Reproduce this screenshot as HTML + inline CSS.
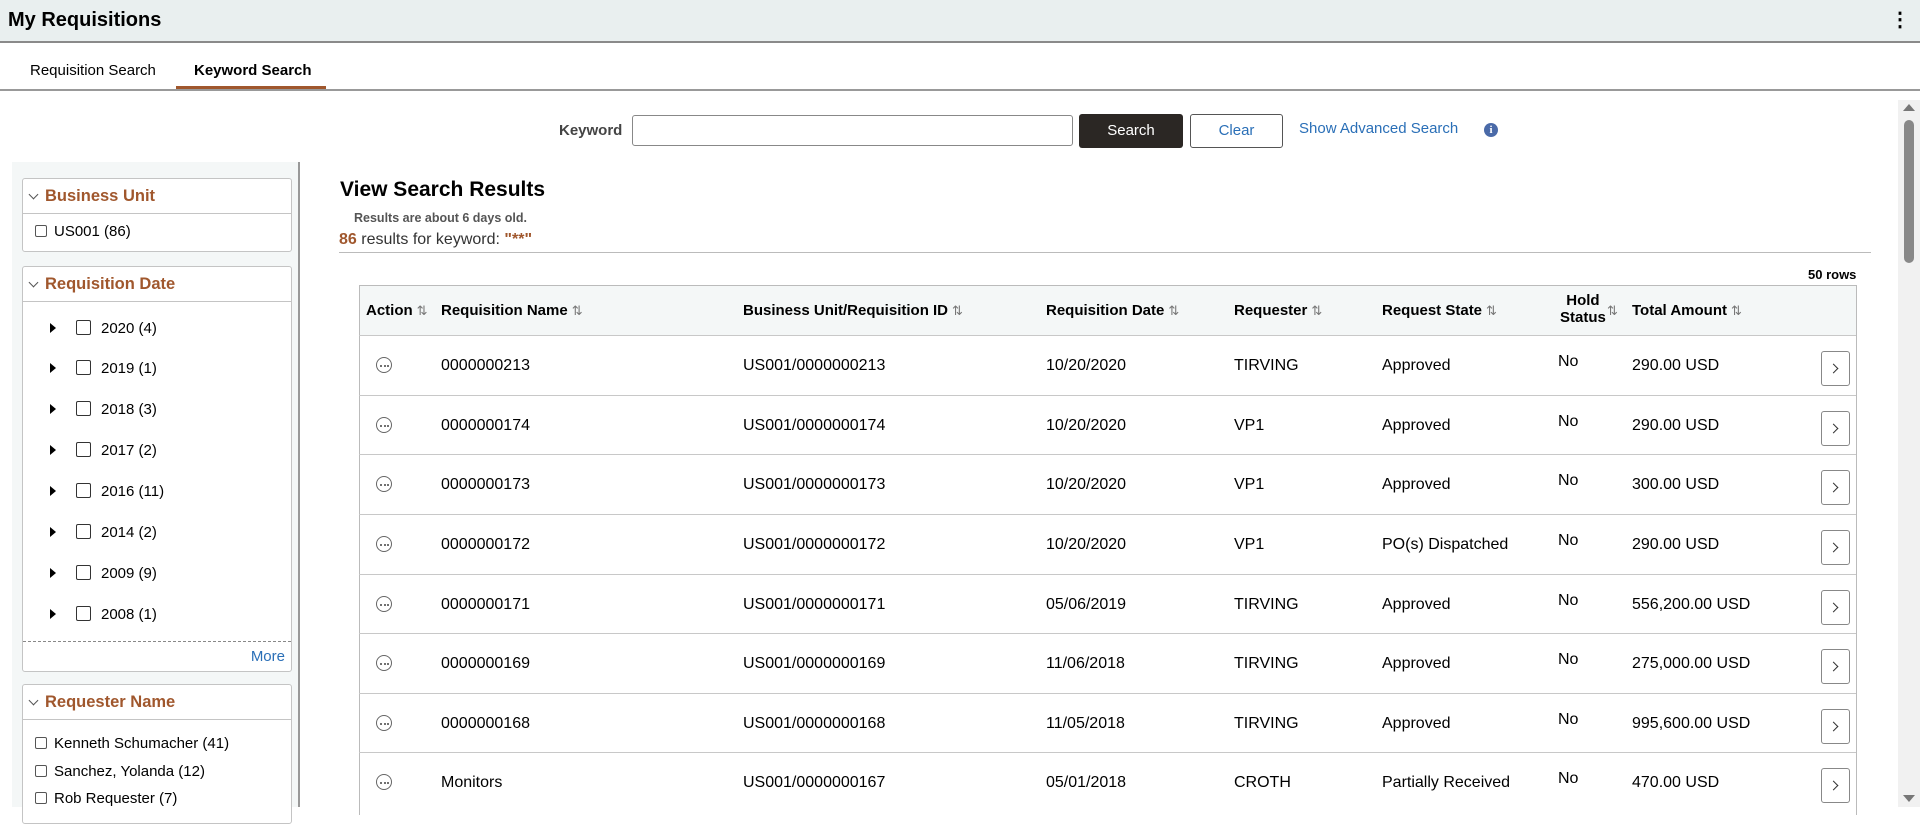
<!DOCTYPE html>
<html><head><style>
*{box-sizing:border-box;margin:0;padding:0}
body{width:1920px;height:807px;overflow:hidden;background:#fff;font-family:"Liberation Sans",Arial,sans-serif;color:#000;position:relative;font-size:16px}
.a{position:absolute;white-space:nowrap}
.hdr{left:0;top:0;width:1920px;height:43px;background:#e9efef;border-bottom:2px solid #8a8a8a}
.facet{position:absolute;left:22px;width:270px;background:#fff;border:1px solid #c4c4c4;border-radius:3px}
.fh{height:35px;border-bottom:1px solid #c4c4c4;color:#a0572d;font-weight:bold;font-size:16.5px;line-height:34px;padding-left:22px;position:relative}
.fh:before{content:"";position:absolute;left:7px;top:12px;width:6px;height:6px;border-right:1.3px solid #555;border-bottom:1.3px solid #555;transform:rotate(45deg)}
.cb{display:inline-block;width:12px;height:12px;border:1px solid #555;border-radius:2px;vertical-align:-1px;margin-right:7px;background:#fff}
.cb2{display:inline-block;width:15px;height:15px;border:1.5px solid #333;border-radius:2px;vertical-align:-2px;margin-right:10px}
.tri{display:inline-block;width:0;height:0;border-left:6px solid #000;border-top:5px solid transparent;border-bottom:5px solid transparent;margin-right:20px;vertical-align:0}
.dr{position:absolute;left:50px;font-size:15px}
.th{position:absolute;font-weight:bold;font-size:15px}
.s{color:#777;font-weight:normal;font-size:13px;margin-left:4px}
.row{position:absolute;left:359px;width:1497px;height:60px;border-top:1px solid #c8c8c8}
.row .c{position:absolute;top:21px;font-size:16px}
.dot{position:absolute;left:17px;top:21px;width:16px;height:16px;border:1px solid #666;border-radius:50%}
.dot i{position:absolute;top:6.5px;width:2px;height:2px;background:#444;border-radius:1px}
.btn{position:absolute;left:1462px;top:15px;width:29px;height:35px;border:1px solid #888;border-radius:3px}
.btn:after{content:"";position:absolute;left:8px;top:13px;width:6px;height:6px;border-right:1.3px solid #333;border-top:1.3px solid #333;transform:rotate(45deg)}
</style></head><body>
<div class="a hdr"></div>
<div class="a" style="left:8px;top:9px;font-size:20px;font-weight:bold">My Requisitions</div>
<div class="a" style="left:1890px;top:10px;font-size:20px;font-weight:bold;line-height:20px">&#8942;</div>
<div class="a" style="left:30px;top:62px;font-size:15px">Requisition Search</div>
<div class="a" style="left:194px;top:62px;font-size:15px;font-weight:bold">Keyword Search</div>
<div class="a" style="left:176px;top:86px;width:150px;height:4px;background:#a0572d"></div>
<div class="a" style="left:0;top:89px;width:1920px;height:2px;background:#999"></div>

<div class="a" style="left:559px;top:122px;font-size:15px;font-weight:bold;color:#444">Keyword</div>
<div class="a" style="left:632px;top:115px;width:441px;height:31px;border:1px solid #888;border-radius:3px"></div>
<div class="a" style="left:1079px;top:114px;width:104px;height:34px;background:#2b2724;border-radius:3px;color:#fff;font-size:15px;text-align:center;line-height:34px">Search</div>
<div class="a" style="left:1190px;top:114px;width:93px;height:34px;border:1px solid #555;border-radius:3px;color:#2a6fb7;font-size:15px;text-align:center;line-height:32px">Clear</div>
<div class="a" style="left:1299px;top:120px;font-size:15px;color:#2a6fb7">Show Advanced Search</div>
<div class="a" style="left:1484px;top:123px;width:14px;height:14px;border-radius:50%;background:#4a6aa8;color:#fff;font-size:11px;font-weight:bold;text-align:center;line-height:14px;font-family:'Liberation Serif',serif">i</div>

<div class="a" style="left:1898px;top:100px;width:22px;height:707px;background:#f1f1f1"></div>
<div class="a" style="left:1903px;top:104px;width:0;height:0;border-left:6px solid transparent;border-right:6px solid transparent;border-bottom:7px solid #777"></div>
<div class="a" style="left:1904px;top:120px;width:10px;height:143px;background:#888;border-radius:5px"></div>
<div class="a" style="left:1903px;top:795px;width:0;height:0;border-left:6px solid transparent;border-right:6px solid transparent;border-top:7px solid #777"></div>

<div class="a" style="left:12px;top:162px;width:288px;height:645px;background:#f4f7f7;border-right:2px solid #999"></div>
<div class="facet" style="top:178px;height:74px"><div class="fh">Business Unit</div>
<div style="position:absolute;left:12px;top:44px;font-size:15px"><span class="cb"></span>US001 (86)</div></div>
<div class="facet" style="top:266px;height:406px"><div class="fh">Requisition Date</div>
<div class="dr" style="top:53px;left:27px"><span class="tri"></span><span class="cb2"></span>2020 (4)</div>
<div class="dr" style="top:93px;left:27px"><span class="tri"></span><span class="cb2"></span>2019 (1)</div>
<div class="dr" style="top:134px;left:27px"><span class="tri"></span><span class="cb2"></span>2018 (3)</div>
<div class="dr" style="top:175px;left:27px"><span class="tri"></span><span class="cb2"></span>2017 (2)</div>
<div class="dr" style="top:216px;left:27px"><span class="tri"></span><span class="cb2"></span>2016 (11)</div>
<div class="dr" style="top:257px;left:27px"><span class="tri"></span><span class="cb2"></span>2014 (2)</div>
<div class="dr" style="top:298px;left:27px"><span class="tri"></span><span class="cb2"></span>2009 (9)</div>
<div class="dr" style="top:339px;left:27px"><span class="tri"></span><span class="cb2"></span>2008 (1)</div>
<div style="position:absolute;left:0;top:374px;width:268px;border-top:1px dashed #888"></div>
<div style="position:absolute;right:6px;top:381px;font-size:15px;color:#2a6fb7">More</div></div>
<div class="facet" style="top:684px;height:140px"><div class="fh">Requester Name</div>
<div style="position:absolute;left:12px;top:45px;font-size:15px;line-height:27.5px"><span class="cb"></span>Kenneth Schumacher (41)<br><span class="cb"></span>Sanchez, Yolanda (12)<br><span class="cb"></span>Rob Requester (7)</div></div>

<div class="a" style="left:340px;top:178px;font-size:21px;font-weight:bold">View Search Results</div>
<div class="a" style="left:354px;top:211px;font-size:12.5px;font-weight:bold;color:#555">Results are about 6 days old.</div>
<div class="a" style="left:339px;top:231px;font-size:16px;color:#333"><b style="color:#a0572d">86</b> results for keyword: <b style="color:#a0572d">"**"</b></div>
<div class="a" style="left:339px;top:252px;width:1532px;height:1px;background:#bbb"></div>
<div class="a" style="left:1808px;top:267px;font-size:13px;font-weight:bold">50 rows</div>

<div class="a" style="left:359px;top:285px;width:1498px;height:530px;border:1px solid #bbb;border-bottom:none"></div>
<div class="a" style="left:360px;top:286px;width:1496px;height:49px;background:#f4f7f7"></div>
<div class="th" style="left:366px;top:302px">Action<span class="s">⇅</span></div>
<div class="th" style="left:441px;top:302px">Requisition Name<span class="s">⇅</span></div>
<div class="th" style="left:743px;top:302px">Business Unit/Requisition ID<span class="s">⇅</span></div>
<div class="th" style="left:1046px;top:302px">Requisition Date<span class="s">⇅</span></div>
<div class="th" style="left:1234px;top:302px">Requester<span class="s">⇅</span></div>
<div class="th" style="left:1382px;top:302px">Request State<span class="s">⇅</span></div>
<div class="th" style="left:1560px;top:292px;text-align:center;line-height:17px">Hold<br>Status</div>
<div class="th" style="left:1607px;top:302px"><span class="s" style="margin:0">⇅</span></div>
<div class="th" style="left:1632px;top:302px">Total Amount<span class="s">⇅</span></div>

<div class="row" style="top:335px"><div class="dot"><i style="left:3px"></i><i style="left:6.5px"></i><i style="left:10px"></i></div><div class="c" style="left:82px">0000000213</div><div class="c" style="left:384px">US001/0000000213</div><div class="c" style="left:687px">10/20/2020</div><div class="c" style="left:875px">TIRVING</div><div class="c" style="left:1023px">Approved</div><div class="c" style="left:1199px;top:17px">No</div><div class="c" style="left:1273px">290.00 USD</div><div class="btn"></div></div>
<div class="row" style="top:395px"><div class="dot"><i style="left:3px"></i><i style="left:6.5px"></i><i style="left:10px"></i></div><div class="c" style="left:82px">0000000174</div><div class="c" style="left:384px">US001/0000000174</div><div class="c" style="left:687px">10/20/2020</div><div class="c" style="left:875px">VP1</div><div class="c" style="left:1023px">Approved</div><div class="c" style="left:1199px;top:17px">No</div><div class="c" style="left:1273px">290.00 USD</div><div class="btn"></div></div>
<div class="row" style="top:454px"><div class="dot"><i style="left:3px"></i><i style="left:6.5px"></i><i style="left:10px"></i></div><div class="c" style="left:82px">0000000173</div><div class="c" style="left:384px">US001/0000000173</div><div class="c" style="left:687px">10/20/2020</div><div class="c" style="left:875px">VP1</div><div class="c" style="left:1023px">Approved</div><div class="c" style="left:1199px;top:17px">No</div><div class="c" style="left:1273px">300.00 USD</div><div class="btn"></div></div>
<div class="row" style="top:514px"><div class="dot"><i style="left:3px"></i><i style="left:6.5px"></i><i style="left:10px"></i></div><div class="c" style="left:82px">0000000172</div><div class="c" style="left:384px">US001/0000000172</div><div class="c" style="left:687px">10/20/2020</div><div class="c" style="left:875px">VP1</div><div class="c" style="left:1023px">PO(s) Dispatched</div><div class="c" style="left:1199px;top:17px">No</div><div class="c" style="left:1273px">290.00 USD</div><div class="btn"></div></div>
<div class="row" style="top:574px"><div class="dot"><i style="left:3px"></i><i style="left:6.5px"></i><i style="left:10px"></i></div><div class="c" style="left:82px">0000000171</div><div class="c" style="left:384px">US001/0000000171</div><div class="c" style="left:687px">05/06/2019</div><div class="c" style="left:875px">TIRVING</div><div class="c" style="left:1023px">Approved</div><div class="c" style="left:1199px;top:17px">No</div><div class="c" style="left:1273px">556,200.00 USD</div><div class="btn"></div></div>
<div class="row" style="top:633px"><div class="dot"><i style="left:3px"></i><i style="left:6.5px"></i><i style="left:10px"></i></div><div class="c" style="left:82px">0000000169</div><div class="c" style="left:384px">US001/0000000169</div><div class="c" style="left:687px">11/06/2018</div><div class="c" style="left:875px">TIRVING</div><div class="c" style="left:1023px">Approved</div><div class="c" style="left:1199px;top:17px">No</div><div class="c" style="left:1273px">275,000.00 USD</div><div class="btn"></div></div>
<div class="row" style="top:693px"><div class="dot"><i style="left:3px"></i><i style="left:6.5px"></i><i style="left:10px"></i></div><div class="c" style="left:82px">0000000168</div><div class="c" style="left:384px">US001/0000000168</div><div class="c" style="left:687px">11/05/2018</div><div class="c" style="left:875px">TIRVING</div><div class="c" style="left:1023px">Approved</div><div class="c" style="left:1199px;top:17px">No</div><div class="c" style="left:1273px">995,600.00 USD</div><div class="btn"></div></div>
<div class="row" style="top:752px"><div class="dot"><i style="left:3px"></i><i style="left:6.5px"></i><i style="left:10px"></i></div><div class="c" style="left:82px">Monitors</div><div class="c" style="left:384px">US001/0000000167</div><div class="c" style="left:687px">05/01/2018</div><div class="c" style="left:875px">CROTH</div><div class="c" style="left:1023px">Partially Received</div><div class="c" style="left:1199px;top:17px">No</div><div class="c" style="left:1273px">470.00 USD</div><div class="btn"></div></div>
</body></html>
